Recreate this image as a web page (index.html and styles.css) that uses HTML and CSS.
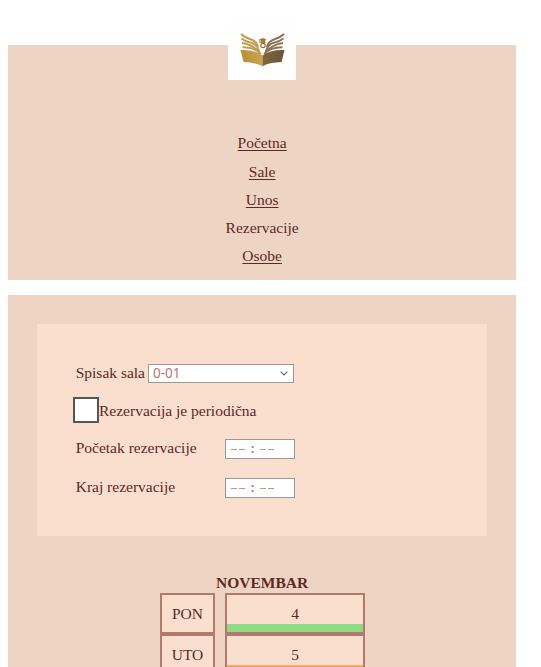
FILE: index.html
```html
<!DOCTYPE html>
<html lang="sr-Latn">
<head>
<meta charset="utf-8">
<title>Rezervacije</title>
<link rel="stylesheet" href="styles.css">
</head>
<body>
<header class="header">
  <div class="logo">
    <svg width="68" height="59" viewBox="0 0 68 59">
      <defs>
        <linearGradient id="gold" x1="0" x2="1"><stop offset="0" stop-color="#b98f38"/><stop offset="1" stop-color="#cba450"/></linearGradient>
        <linearGradient id="brown" x1="0" x2="1"><stop offset="0" stop-color="#80683f"/><stop offset="1" stop-color="#6a5338"/></linearGradient>
      </defs>
      <path fill="url(#gold)" d="M12.500 29Q27 28.500 34.500 34.500V45.300Q28 41.500 15.500 41Z"/>
      <path fill="url(#brown)" d="M56.500 29Q42 28.500 34.500 34.500V45.300Q41 41.500 53.500 41Z"/>
      <g fill="none" stroke="#c19c50" stroke-width="2">
        <path d="M13 13Q17 17 23 18.500Q28.500 20 30 26"/>
        <path d="M13.500 17.500Q18 21 23 21.800Q29 23 31 30"/>
        <path d="M14 22Q25 23.500 31.500 31.500"/>
        <path d="M14.500 26.300Q26 26 33 33"/>
      </g>
      <g fill="none" stroke="#8b7554" stroke-width="2">
        <path d="M56 13Q52 17 46 18.500Q40.500 20 39 26"/>
        <path d="M55.500 17.500Q51 21 46 21.800Q40 23 38 30"/>
        <path d="M55 22Q44 23.500 37.500 31.500"/>
        <path d="M54.500 26.300Q43 26 36 33"/>
      </g>
      <path fill="#a27c30" d="M31 18.500L35 17L38.500 18.500L35 20.500ZM32.500 19.500H37.500V22H32.500ZM31 18.500V22H31.700V18.500Z"/>
      <circle cx="35" cy="24.500" r="2.200" fill="#fff" stroke="#8f7442" stroke-width="1.200"/>
    </svg>
  </div>
  <nav class="menu">
    <a href="#">Početna</a>
    <a href="#">Sale</a>
    <a href="#">Unos</a>
    <span>Rezervacije</span>
    <a href="#">Osobe</a>
  </nav>
</header>
<main class="main">
  <form class="panel">
    <div class="row row-select">
      <label>Spisak sala</label>
      <div class="select"><span>0-01</span>
        <svg width="8" height="5" viewBox="0 0 8 5"><path d="M.7.700L4 4L7.300.700" fill="none" stroke="#666" stroke-width="1.100"/></svg>
      </div>
    </div>
    <div class="row row-check"><span class="checkbox"></span><label>Rezervacija je periodična</label></div>
    <div class="row row-start"><label>Početak rezervacije</label><div class="time"><i></i><i></i><b>:</b><i></i><i></i></div></div>
    <div class="row row-end"><label>Kraj rezervacije</label><div class="time"><i></i><i></i><b>:</b><i></i><i></i></div></div>
  </form>
  <section class="calendar">
    <h2>NOVEMBAR</h2>
    <div class="days">
      <div class="cell">PON</div><div class="cell free">4</div>
      <div class="cell">UTO</div><div class="cell busy">5</div>
    </div>
  </section>
</main>
</body>
</html>
```
FILE: styles.css
```css
* { box-sizing: border-box; }
html { height: 100%; overflow: hidden; background: #fff; }
body {
  margin: 0;
  padding: 45px 24.700px 0 8px;
  height: 667px;
  overflow: hidden;
  color: #5d2925;
  font: 15.500px/18px "Liberation Serif", "Times New Roman", serif;
}
.header {
  height: 234.500px;
  background: #eed5c3;
  display: flex;
  flex-direction: column;
  align-items: center;
}
.logo {
  width: 68px;
  height: 59px;
  margin-top: -24.500px;
  background: #fefefe;
  flex: none;
}
.logo svg { display: block; }
.menu {
  display: flex;
  flex-direction: column;
  align-items: center;
  margin-top: 49.800px;
}
.menu > * { line-height: 28.300px; color: inherit; }
.menu a { text-underline-offset: 2px; text-decoration-thickness: 1px; }
.main {
  margin-top: 15.700px;
  height: 400px;
  padding: 29px 29px 0;
  background: #eed5c3;
}
.panel {
  height: 212px;
  padding: 39px 36px 0;
  background: #fadfce;
}
.row { display: flex; align-items: center; }
.row-select { height: 20px; padding-left: 2.700px; }
.select {
  width: 146px;
  height: 19px;
  margin-left: 3px;
  padding: 0 5px 0 4px;
  display: flex;
  align-items: center;
  justify-content: space-between;
  background: #fff;
  border: 1px solid #9b9895;
  color: #b8776b;
  font: 13.500px/17px "Noto Sans", sans-serif;
}
.row-check { height: 26px; margin-top: 14px; }
.row-check label { padding-top: 2px; }
.checkbox {
  width: 26px;
  height: 26px;
  background: #fff;
  border: 2px solid #555;
}
.row-start, .row-end { height: 20px; padding-left: 2.700px; }
.row-start { margin-top: 16px; }
.row-end { margin-top: 19px; }
.row-start label, .row-end label { width: 149.300px; padding-bottom: 3px; }
.time {
  width: 70px;
  height: 20px;
  padding-left: 5px;
  display: flex;
  align-items: center;
  background: #fff;
  border: 1px solid #9b9895;
}
.time i { width: 6px; height: 1px; margin-right: 2px; background: #c88f85; }
.time b { width: 11px; margin: 0 2px 0 0; padding-top: 1px; text-align: center; color: #b8776b; font: bold 12px/14px "Liberation Mono", monospace; }
.calendar { margin-top: 37px; }
.calendar h2 { margin: 0; text-align: center; font-size: 15.500px; line-height: 19px; }
.days {
  width: 205px;
  margin: 1px 0 0 123px;
  display: grid;
  grid-template-columns: 55px 140px;
  grid-auto-rows: 41px;
  column-gap: 10px;
}
.cell {
  display: flex;
  align-items: center;
  justify-content: center;
  padding-top: 1px;
  background: #fadfce;
  border: 2px solid #b4796d;
}
.free { background: linear-gradient(to top, #8edb83 8px, #fadfce 8px) padding-box; }
.busy { background: linear-gradient(to top, #f7a865 8px, #fadfce 8px) padding-box; }
```
